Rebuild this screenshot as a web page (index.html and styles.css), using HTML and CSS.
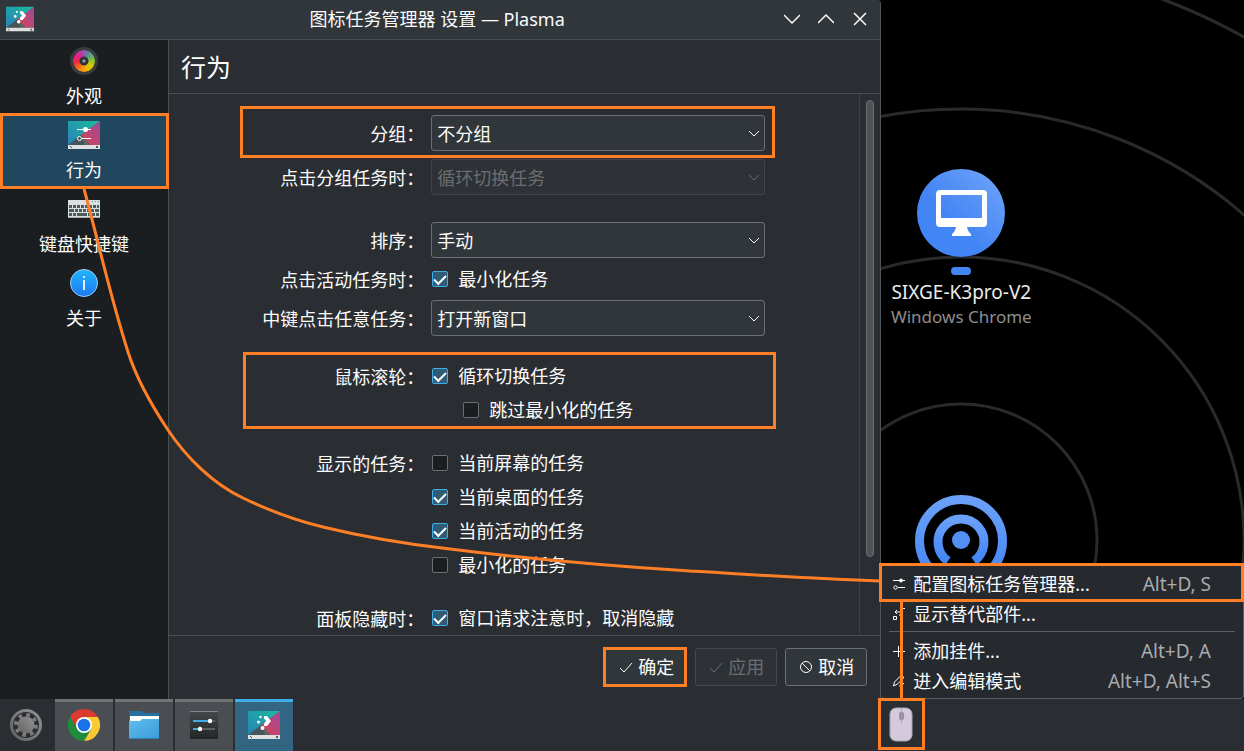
FILE: index.html
```html
<!DOCTYPE html>
<html lang="zh-CN">
<head>
<meta charset="utf-8">
<meta name="viewport" content="width=device-width, initial-scale=1">
<title>图标任务管理器 设置 — Plasma</title>
<link rel="stylesheet" href="styles.css">
</head>
<body>
<svg class="defs" width="0" height="0" aria-hidden="true">
  <defs>
    <linearGradient id="teal" x1="0" y1="1" x2="1" y2="0"><stop offset="0" stop-color="#2980b9"/><stop offset="1" stop-color="#1abc9c"/></linearGradient>
    <linearGradient id="pink" x1="0" y1="1" x2="1" y2="0"><stop offset="0" stop-color="#da4453"/><stop offset="1" stop-color="#9b4a9c"/></linearGradient>
    <linearGradient id="info" x1="0" y1="0" x2="0" y2="1"><stop offset="0" stop-color="#20b6fa"/><stop offset="1" stop-color="#1d77f2"/></linearGradient>
    <linearGradient id="folder" x1="0" y1="0" x2="1" y2="1"><stop offset="0" stop-color="#60bdf0"/><stop offset="1" stop-color="#3a9bd5"/></linearGradient>
    <linearGradient id="dark" x1="0" y1="0" x2="0" y2="1"><stop offset="0" stop-color="#45474a"/><stop offset="1" stop-color="#232527"/></linearGradient>
    <linearGradient id="gear" x1="0" y1="1" x2="1" y2="0"><stop offset="0" stop-color="#606060"/><stop offset="1" stop-color="#969696"/></linearGradient>
    <linearGradient id="blue" x1="0" y1="1" x2="1" y2="0"><stop offset="0.4" stop-color="#4285f4"/><stop offset="1" stop-color="#72a5f9"/></linearGradient>
    <linearGradient id="cast" x1="0" y1="0" x2="0" y2="1"><stop offset="0" stop-color="#6ba0f9"/><stop offset="1" stop-color="#4285f4"/></linearGradient>
    <symbol id="wallpaper" viewBox="0 0 32 32">
      <path fill="url(#teal)" d="M0 2h32L13 17 0 27z"/>
      <path fill="url(#pink)" d="M32 2v24H22l-9-10z"/>
      <path fill="#46565a" d="M13 16 0 26h22z"/>
      <path fill="#5e6767" d="m13 16 4 10h5z"/>
      <path fill="#dfe1e1" d="M0 26h32v4H0z"/>
      <path fill="#50565a" d="M28 27h2v2h-2zM2 27h1v1h1v1H3v-1H2z"/>
    </symbol>
    <symbol id="plasma" viewBox="0 0 32 32">
      <use href="#wallpaper"/>
      <path fill="#fff" d="M16 7h3l4 5-4 5h-3v-2.500l2.300-2.500L16 9.500z"/>
      <circle cx="12.500" cy="8" r="1.200" fill="#fff"/><circle cx="10.500" cy="13" r="1.500" fill="#fff"/><circle cx="14.500" cy="19" r="2" fill="#fff"/>
    </symbol>
  </defs>
</svg>

<div class="workspace">
  <main class="window">
    <header class="titlebar">
      <svg class="app-icon" viewBox="0 0 32 32"><use href="#plasma"/></svg>
      <h1 class="title">图标任务管理器 设置 — Plasma</h1>
      <div class="window-buttons">
        <button class="window-button" aria-label="最小化"><svg viewBox="0 0 16 16"><path d="m0 4 8 8 8-8"/></svg></button>
        <button class="window-button" aria-label="最大化"><svg viewBox="0 0 16 16"><path d="m0 12 8-8 8 8"/></svg></button>
        <button class="window-button" aria-label="关闭"><svg viewBox="0 0 16 16"><path d="m2 2 12 12M14 2 2 14"/></svg></button>
      </div>
    </header>

    <div class="window-body">
      <nav class="sidebar">
        <a class="nav-item" href="#appearance">
          <span class="nav-icon wheel"></span>外观
        </a>
        <a class="nav-item active marked-nav" href="#behavior" aria-current="page">
          <svg class="nav-icon" viewBox="0 0 32 32"><use href="#wallpaper"/><path stroke="#fff" fill="none" d="M9 10.500h14M14 19.500h9"/><circle cx="17.500" cy="10.500" r="2.500" fill="#fff"/><circle cx="11.500" cy="19.500" r="2" fill="none" stroke="#fff"/></svg>行为
        </a>
        <a class="nav-item" href="#shortcuts">
          <svg class="nav-icon" viewBox="0 0 32 32">
            <path fill="#dcdfe0" d="M0 7h32v17H0z"/><path fill="#a9adaf" d="M0 24h32v1H0z"/>
            <path stroke="#4d5b5c" stroke-width="3" stroke-dasharray="3 1" d="M1 13.500h30"/>
            <path stroke="#4d5b5c" stroke-width="3" stroke-dasharray="5 1 3 1 3 1 3 1 3 1 3 1 5 1" d="M1 17.500h30"/>
            <path stroke="#4d5b5c" stroke-width="3" stroke-dasharray="3 1 3 1 10 1 3 1 3 1 3 1" d="M1 21.500h30"/>
            <path stroke="#2ea876" stroke-dasharray="1 2" d="M24 8.500h7"/>
          </svg>键盘快捷键
        </a>
        <a class="nav-item" href="#about">
          <svg class="nav-icon" viewBox="0 0 32 32"><circle cx="16" cy="16" r="13.500" fill="url(#info)" stroke="#9fcdf7"/><path fill="#d9eefe" d="M15 9h2v2h-2zM15 13h2v10h-2z"/></svg>关于
        </a>
      </nav>

      <section class="page">
        <h2 class="page-title">行为</h2>
        <div class="scroll-area">
          <form class="form" id="settings">
            <div class="group">
              <div class="row marked-row">
                <label class="label" for="grouping">分组：</label>
                <span class="combo"><select id="grouping"><option>不分组</option></select><svg class="arrow" viewBox="0 0 12 12"><path d="m1 3 5 5 5-5"/></svg></span>
              </div>
              <div class="row">
                <label class="label" for="group-click">点击分组任务时：</label>
                <span class="combo disabled"><select id="group-click" disabled><option>循环切换任务</option></select><svg class="arrow" viewBox="0 0 12 12"><path d="m1 3 5 5 5-5"/></svg></span>
              </div>
            </div>
            <div class="group">
              <div class="row">
                <label class="label" for="sorting">排序：</label>
                <span class="combo"><select id="sorting"><option>手动</option></select><svg class="arrow" viewBox="0 0 12 12"><path d="m1 3 5 5 5-5"/></svg></span>
              </div>
              <div class="row">
                <span class="label">点击活动任务时：</span>
                <label class="check"><input type="checkbox" checked>最小化任务</label>
              </div>
              <div class="row">
                <label class="label" for="middle-click">中键点击任意任务：</label>
                <span class="combo"><select id="middle-click"><option>打开新窗口</option></select><svg class="arrow" viewBox="0 0 12 12"><path d="m1 3 5 5 5-5"/></svg></span>
              </div>
            </div>
            <div class="group marked-group">
              <div class="row">
                <span class="label">鼠标滚轮：</span>
                <label class="check"><input type="checkbox" checked>循环切换任务</label>
              </div>
              <div class="row">
                <span class="label"></span>
                <label class="check nested"><input type="checkbox">跳过最小化的任务</label>
              </div>
            </div>
            <div class="group">
              <div class="row">
                <span class="label">显示的任务：</span>
                <label class="check"><input type="checkbox">当前屏幕的任务</label>
              </div>
              <div class="row">
                <span class="label"></span>
                <label class="check"><input type="checkbox" checked>当前桌面的任务</label>
              </div>
              <div class="row">
                <span class="label"></span>
                <label class="check"><input type="checkbox" checked>当前活动的任务</label>
              </div>
              <div class="row">
                <span class="label"></span>
                <label class="check"><input type="checkbox">最小化的任务</label>
              </div>
            </div>
            <div class="group">
              <div class="row">
                <span class="label">面板隐藏时：</span>
                <label class="check"><input type="checkbox" checked>窗口请求注意时，取消隐藏</label>
              </div>
            </div>
          </form>
          <div class="scrollbar"><div class="thumb"></div></div>
        </div>
        <footer class="actions">
          <button class="action marked-action" type="submit" form="settings"><svg viewBox="0 0 16 16"><path d="m2 9 4 4 8-9"/></svg>确定</button>
          <button class="action" type="button" disabled><svg viewBox="0 0 16 16"><path d="m2 9 4 4 8-9"/></svg>应用</button>
          <button class="action" type="button"><svg viewBox="0 0 16 16"><circle cx="8" cy="8" r="5.500"/><path d="m4 4 8 8"/></svg>取消</button>
        </footer>
      </section>
    </div>
  </main>

  <aside class="desktop">
    <svg class="rings" width="363" height="699" viewBox="0 0 363 699" aria-hidden="true">
      <g fill="none" stroke="#2a2a2a" stroke-width="3"><circle cx="80" cy="540" r="136"/><circle cx="80" cy="540" r="283"/><circle cx="80" cy="540" r="431"/><circle cx="80" cy="540" r="577"/></g>
      <g fill="none" stroke="url(#cast)" stroke-width="9"><circle cx="80" cy="541" r="41.500"/><path d="M67 561a23 23 0 1 1 26 0"/></g>
      <circle cx="80" cy="540" r="9" fill="#5290f6"/>
    </svg>
    <div class="device">
      <svg class="device-icon" viewBox="0 0 88 88">
        <circle cx="44" cy="44" r="44" fill="url(#blue)"/>
        <path fill="#fff" fill-rule="evenodd" d="M23 21h43q4 0 4 4v29q0 4-4 4H50q1 5 4 7v2H35v-2q3-2 4-7H23q-4 0-4-4V25q0-4 4-4zm1 5v23h41V26z"/>
      </svg>
      <span class="device-badge"></span>
      <span class="device-name">SIXGE-K3pro-V2</span>
      <span class="device-kind">Windows Chrome</span>
    </div>
    <div class="menu" role="menu">
      <button class="menu-item marked-menu" role="menuitem"><svg viewBox="0 0 16 16"><path d="M2 4.500h12M7 11.500h7"/><circle cx="10" cy="4.500" r="1.500" fill="#fcfcfc"/><circle cx="4.500" cy="11.500" r="1.700"/></svg>配置图标任务管理器...<kbd>Alt+D, S</kbd></button>
      <button class="menu-item" role="menuitem"><svg viewBox="0 0 16 16"><path d="M2.500 10.500h3v3h-3zM11.500 6V2.500H14M4 6h6M6 4 4 6l2 2M8 9h4M10 7l2 2-2 2"/></svg>显示替代部件...</button>
      <hr class="menu-line">
      <button class="menu-item" role="menuitem"><svg viewBox="0 0 16 16"><path d="M2 8.500h12M7.500 3v11"/></svg>添加挂件...<kbd>Alt+D, A</kbd></button>
      <button class="menu-item" role="menuitem"><svg viewBox="0 0 16 16"><path d="m2.500 13 1-4 6-6q3-1 3 2l-6 6zM8 13q3 1 5-3"/></svg>进入编辑模式<kbd>Alt+D, Alt+S</kbd></button>
    </div>
  </aside>
</div>

<footer class="taskbar">
  <button class="launcher" aria-label="应用程序启动器"><svg viewBox="0 0 32 32">
    <path fill="url(#gear)" fill-rule="evenodd" d="M16 0a16 16 0 1 0 0 32 16 16 0 0 0 0-32zm0 3a13 13 0 1 1 0 26 13 13 0 0 1 0-26z"/>
    <circle cx="16" cy="16" r="8.500" fill="url(#gear)"/>
    <circle cx="16" cy="16" r="9.500" fill="none" stroke="#7c7c7c" stroke-width="5" stroke-dasharray="3.400 4.060"/></svg></button>
  <button class="task" aria-label="Chrome"><svg viewBox="0 0 32 32">
    <path fill="#db3a2f" d="M2.140 8A16 16 0 0 1 29.860 8H16l-6.930 12z"/>
    <path fill="#fcc934" d="M29.860 8A16 16 0 0 1 16 32l6.930-12L16 8z"/>
    <path fill="#1e8e3e" d="M16 32A16 16 0 0 1 2.140 8l6.930 12L22.930 20z"/>
    <circle cx="16" cy="16" r="8" fill="#fff"/><circle cx="16" cy="16" r="6.300" fill="#1a73e8"/></svg></button>
  <button class="task" aria-label="文件管理器"><svg viewBox="0 0 32 32"><path fill="#266f9e" d="M1 2h13l2 2h15v12H1z"/><path fill="#fbfbfb" d="M2 7h29v8H2z"/><path fill="url(#folder)" d="M1 12h11l2-2h17v20H1z"/><path fill="#2a82ba" d="M1 29h30v1H1z"/></svg></button>
  <button class="task" aria-label="系统设置"><svg viewBox="0 0 32 32"><path fill="url(#dark)" d="M2 2h28v28H2z"/><path fill="#85888b" d="M2 2h28v1H2z"/><path stroke="#3daee9" stroke-width="2" d="M5 12h17M5 20h7"/><path stroke="#5d6063" stroke-width="2" d="M22 12h5M12 20h15"/><circle cx="22" cy="12" r="2.200" fill="#fff"/><circle cx="12" cy="20" r="2.200" fill="#fff"/></svg></button>
  <button class="task current" aria-label="图标任务管理器 设置"><svg viewBox="0 0 32 32"><use href="#plasma"/></svg></button>
</footer>

<svg class="guides" width="1244" height="751" viewBox="0 0 1244 751" aria-hidden="true">
  <path d="M84 189C98 240 109 292 128 352C137 380 150 403 168 430C186 457 213 484 243 498C270 511 298 521 323 527C364 537 405 544 450 549C530 559 610 566 690 571C754 575 817 579 880 581"/>
  <path d="M901.500 602v96"/>
  <path d="M879.500 699.500h44v49h-44z"/>
  <rect class="mouse" x="890" y="708" width="22" height="33" rx="6"/>
  <path class="wheel-line" d="M901.500 709v14"/>
  <rect class="mouse-wheel" x="899" y="712" width="5" height="8" rx="2"/>
</svg>
</body>
</html>
```
FILE: styles.css
```css
:root {
  --orange: #ff7f27;
  --text: #fcfcfc;
  --panel: #2a2d31;
  --raised: #31363a;
  --line: #4a4e52;
}
* { box-sizing: border-box; }
body {
  margin: 0;
  height: 100vh;
  display: flex;
  flex-direction: column;
  overflow: hidden;
  background: #000;
  color: var(--text);
  font: 18px/26px "Noto Sans", "Noto Sans CJK SC", sans-serif;
}
button, select, input { font: inherit; color: inherit; margin: 0; }
button { border: 0; background: none; padding: 0; }
svg { flex: none; }
.defs { position: absolute; }

.workspace { flex: 1; min-height: 0; display: flex; }
.window {
  flex: 881;
  min-width: 0;
  display: flex;
  flex-direction: column;
  background: var(--panel);
  border-right: 1px solid #4d565d;
  border-radius: 0 4px 0 0;
}
.titlebar {
  display: grid;
  grid-template-columns: 1fr auto 1fr;
  align-items: center;
  height: 40px;
  padding: 0 12px 2px 6px;
  background: var(--raised);
  border-bottom: 1px solid var(--line);
  border-radius: 0 4px 0 0;
}
.app-icon { width: 28px; height: 28px; }
.title { margin: 0; font-size: 18px; font-weight: 400; }
.window-buttons { display: flex; justify-content: flex-end; gap: 18px; }
.window-button { width: 16px; height: 16px; display: flex; }
.window-button svg { width: 16px; height: 16px; fill: none; stroke: var(--text); stroke-width: 1.500; }

.window-body { flex: 1; min-height: 0; display: flex; }
.sidebar { width: 169px; background: #1b1e20; border-right: 1px solid var(--line); }
.nav-item {
  display: flex;
  flex-direction: column;
  align-items: center;
  gap: 6px;
  height: 74px;
  padding-top: 5px;
  color: inherit;
  text-decoration: none;
}
.nav-item.active { background: #20475d; }
.nav-icon { width: 32px; height: 32px; }
.wheel {
  width: 28px;
  height: 28px;
  margin: 2px;
  border: 3px solid #393c40;
  border-radius: 50%;
  background:
    radial-gradient(circle, #a0a0a0 0 1px, #303336 2px 4px, transparent 5px) padding-box,
    conic-gradient(#9a55b0, #4e9b94 40deg, #7fbf3c 80deg, #cbd000 120deg, #f5b400 165deg, #f77f16 210deg, #f22b3c 260deg, #e0218a 310deg, #9a55b0) padding-box;
}

.page { flex: 1; min-width: 0; display: flex; flex-direction: column; }
.page-title {
  margin: 0;
  height: 54px;
  padding-left: 12px;
  font-size: 25px;
  font-weight: 400;
  line-height: 54px;
  border-bottom: 1px solid var(--line);
}
.scroll-area { flex: 1; min-height: 0; display: flex; overflow: hidden; }
.form {
  width: 504px;
  margin: 0 auto;
  padding-top: 21px;
  display: flex;
  flex-direction: column;
  gap: 27px;
}
.group { display: flex; flex-direction: column; gap: 8px; }
.row { display: flex; align-items: center; gap: 7px; }
.label { width: 162px; height: 26px; line-height: 28px; white-space: nowrap; display: flex; justify-content: flex-end; }
.combo { position: relative; flex: 1; display: flex; margin-right: 1px; }
.combo select {
  appearance: none;
  width: 100%;
  height: 36px;
  padding: 1px 5px 0;
  border: 1px solid #6b6f73;
  border-radius: 3px;
  background: var(--raised);
}
.combo.disabled select { background: #2e3135; border-color: #404347; color: #6b6e71; opacity: 1; }
.arrow {
  position: absolute;
  right: 5px;
  top: 13px;
  width: 12px;
  height: 12px;
  fill: none;
  stroke: var(--text);
  pointer-events: none;
}
.disabled .arrow { stroke: #6b6e71; }
.check { display: flex; align-items: center; gap: 10px; height: 26px; padding-left: 1px; white-space: nowrap; }
.check.nested { padding-left: 32px; }
.check input {
  appearance: none;
  width: 16px;
  height: 16px;
  border: 1px solid #6b6f73;
  border-radius: 2px;
  background: #1b1e20;
  display: grid;
  place-items: center;
}
.check input:checked { background: #2f5b75; border-color: #3daee9; }
.check input:checked::after {
  content: "";
  width: 10px;
  height: 5px;
  border: solid var(--text);
  border-width: 0 0 2px 2px;
  transform: translateY(-1px) rotate(-45deg);
}
.scrollbar { width: 21px; padding: 6px 6px 0; border-left: 1px solid #3c4044; }
.thumb { width: 8px; height: 457px; border: 1px solid #6b6f73; border-radius: 4px; background: #4f5356; }

.actions {
  display: flex;
  justify-content: flex-end;
  gap: 8px;
  padding: 12px 13px 13px;
  border-top: 1px solid var(--line);
}
.action {
  display: flex;
  align-items: center;
  justify-content: center;
  gap: 4px;
  width: 82px;
  height: 38px;
  border: 1px solid #6b6f73;
  border-radius: 3px;
  background: var(--raised);
}
.action svg { width: 16px; height: 16px; fill: none; stroke: currentColor; }
.action:disabled { background: #2e3236; border-color: #45494c; color: #6b6e71; }

.desktop { position: relative; flex: 363; min-width: 0; background: #000; }
.rings { display: block; }
.device {
  position: absolute;
  left: 0;
  top: 169px;
  width: 160px;
  display: flex;
  flex-direction: column;
  align-items: center;
  font-family: "Noto Sans", sans-serif;
}
.device-icon { width: 88px; height: 88px; }
.device-badge { width: 20px; height: 8px; margin: 10px 0 4px; border-radius: 4px; background: #4285f4; }
.device-name { font-size: 19px; color: #ececec; white-space: nowrap; }
.device-kind { font-size: 17px; line-height: 24px; color: #8e8e8e; white-space: nowrap; }

.menu {
  position: absolute;
  left: 0;
  right: 0;
  bottom: 0;
  padding: 4px 0 2px;
  background: #26292d;
  border: solid #5a5e62;
  border-width: 0 1px 1px 0;
  border-radius: 0 0 4px 4px;
}
.menu-item { display: flex; align-items: center; width: 100%; height: 30px; padding: 0 32px 0 10px; white-space: nowrap; text-align: left; }
.menu-item svg { width: 16px; height: 16px; margin-right: 6px; fill: none; stroke: var(--text); }
.menu-item kbd { margin-left: auto; font: inherit; font-size: 19px; color: #a9abad; }
.menu-line { margin: 2px 8px 4px; border: 0; border-top: 1px solid #5a5e62; }

.taskbar { display: flex; gap: 2px; height: 52px; background: var(--panel); }
.launcher { width: 53px; padding-right: 2px; display: flex; align-items: center; justify-content: center; }
.launcher svg, .task svg { width: 32px; height: 32px; }
.task {
  width: 58px;
  display: flex;
  align-items: center;
  justify-content: center;
  padding-bottom: 3px;
  background: #4a4d51;
  border-top: 3px solid #707376;
}
.task.current { background: #316582; border-top-color: #3daee9; }

.marked-nav, .marked-row, .marked-group, .marked-action, .marked-menu { position: relative; }
.marked-nav::before, .marked-row::before, .marked-group::before, .marked-action::before, .marked-menu::before {
  content: "";
  position: absolute;
  border: 3px solid var(--orange);
  pointer-events: none;
}
.marked-nav::before { inset: -1px -1px -1px 0; }
.marked-row::before { inset: -9px -9px -7px -22px; }
.marked-group::before { inset: -11px -10px -6px -19px; }
.marked-action::before { inset: -2px -1px -2px -3px; }
.marked-menu::before { inset: -6px -1px -3px -2px; }

.guides { position: absolute; left: 0; top: 0; pointer-events: none; fill: none; stroke: var(--orange); stroke-width: 3; }
.guides .mouse { fill: #d3cadb; stroke: #aaa3b2; stroke-width: 1; }
.guides .wheel-line { stroke: #aaa1b5; stroke-width: 1; }
.guides .mouse-wheel { fill: #9a90a8; stroke: none; }
```
